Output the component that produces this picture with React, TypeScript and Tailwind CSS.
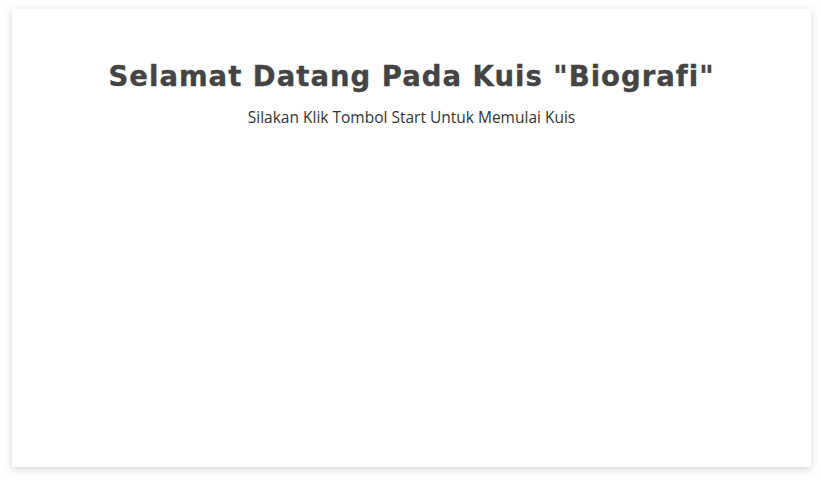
import React from 'react';

const App = () => {
  return (
    <div className="min-h-screen bg-white px-3 pt-[9px]">
      <div className="h-[458px] bg-white shadow-[0_2px_8px_rgba(0,0,0,0.18)] flex flex-col items-center pt-[50px]">
        <h1 className="text-[27.5px] leading-[34px] font-bold tracking-[1px] [-webkit-text-stroke:0.35px_#444444] text-[#444444] font-['DejaVu_Sans',sans-serif]">
          Selamat Datang Pada Kuis "Biografi"
        </h1>
        <p className="mt-[14px] text-[15.5px] leading-[20px] text-[#333333] font-['Open_Sans',sans-serif]">
          Silakan Klik Tombol Start Untuk Memulai Kuis
        </p>
      </div>
    </div>
  );
};

export default App;
